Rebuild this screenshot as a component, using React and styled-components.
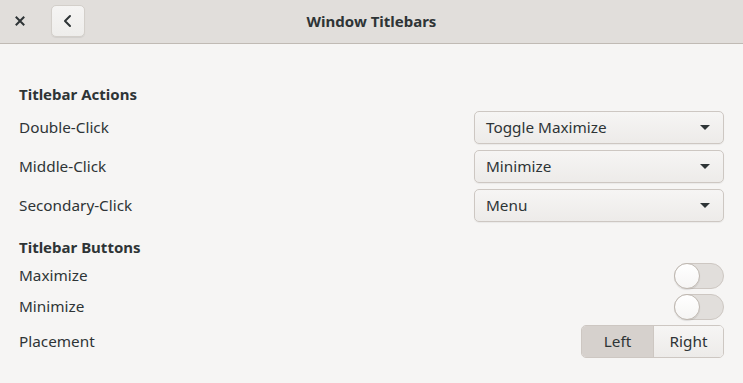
import styled, { createGlobalStyle } from "styled-components";

const GlobalStyle = createGlobalStyle`
  html, body {
    margin: 0;
    padding: 0;
    background: #f6f5f4;
  }
  body {
    font-family: "Noto Sans", "DejaVu Sans", sans-serif;
    color: #2e3436;
  }
`;

const Window = styled.div`
  width: 743px;
  height: 383px;
  background: #f6f5f4;
  display: flex;
  flex-direction: column;
`;

const HeaderBar = styled.div`
  height: 44px;
  box-sizing: border-box;
  background: #e1dedb;
  border-bottom: 1px solid #c0bab4;
  display: flex;
  align-items: center;
  position: relative;
  padding: 0 0 0 12px;
`;

const CloseButton = styled.div`
  width: 16px;
  height: 16px;
  display: flex;
  align-items: center;
  justify-content: center;
  margin-right: 23px;
  margin-top: -1px;
`;

const BackButton = styled.div`
  width: 34px;
  height: 32px;
  box-sizing: border-box;
  border: 1px solid #d3cfca;
  border-radius: 5px;
  background: linear-gradient(#f5f4f3, #eeedeb);
  box-shadow: 0 1px 1px rgba(0, 0, 0, 0.07);
  display: flex;
  align-items: center;
  justify-content: center;
  margin-top: -2px;
`;

const Title = styled.div`
  position: absolute;
  left: 0;
  right: 0;
  top: 0;
  bottom: 0;
  display: flex;
  align-items: center;
  justify-content: center;
  font-weight: 700;
  font-size: 15px;
  color: #2e3436;
  pointer-events: none;
  padding-bottom: 2px;
`;

const Content = styled.div`
  padding: 40px 19px 0 19px;
  display: flex;
  flex-direction: column;
  gap: 15px;
`;

const Section = styled.div`
  display: flex;
  flex-direction: column;
  gap: ${({ $gap }) => $gap}px;
`;

const Heading = styled.div`
  font-weight: 700;
  font-size: 15px;
  height: 20px;
  line-height: 20px;
  margin-bottom: 1px;
`;

const Row = styled.div`
  display: flex;
  align-items: center;
  justify-content: space-between;
  height: ${({ $h }) => $h}px;
`;

const Label = styled.div`
  font-size: 15.3px;
  padding-bottom: 2px;
`;

const Dropdown = styled.div`
  width: 250px;
  height: 33px;
  box-sizing: border-box;
  border: 1px solid #cdc7c2;
  border-radius: 5px;
  background: linear-gradient(#f6f5f4, #edebe9);
  box-shadow: 0 1px 1px rgba(0, 0, 0, 0.05);
  display: flex;
  align-items: center;
  justify-content: space-between;
  padding: 0 13px 1px 11px;
  font-size: 15.3px;
`;

const Arrow = styled.div`
  width: 0;
  height: 0;
  border-left: 5px solid transparent;
  border-right: 5px solid transparent;
  border-top: 5px solid #2e3436;
  margin-top: 1px;
`;

const Switch = styled.div`
  width: 50px;
  height: 26px;
  box-sizing: border-box;
  border: 1px solid #cdc7c2;
  border-radius: 13px;
  background: #e1dedb;
  position: relative;
`;

const Knob = styled.div`
  position: absolute;
  left: -1px;
  top: -1px;
  width: 26px;
  height: 26px;
  box-sizing: border-box;
  border-radius: 50%;
  border: 1px solid #bfb8b1;
  background: linear-gradient(#ffffff, #f6f5f4);
  box-shadow: 0 1px 1px rgba(0, 0, 0, 0.1);
`;

const Segmented = styled.div`
  display: flex;
  height: 33px;
  box-sizing: border-box;
  border: 1px solid #cdc7c2;
  border-radius: 5px;
  overflow: hidden;
`;

const Segment = styled.div`
  width: ${({ $w }) => $w}px;
  box-sizing: border-box;
  display: flex;
  align-items: center;
  justify-content: center;
  padding-bottom: 1px;
  font-size: 15.3px;
  background: ${({ $active }) =>
    $active ? "#d6d1cd" : "linear-gradient(#f6f5f4, #edebe9)"};
  & + & {
    border-left: 1px solid #cdc7c2;
  }
`;

export default function App() {
  return (
    <>
      <GlobalStyle />
      <Window>
        <HeaderBar>
          <CloseButton>
            <svg width="10" height="10" viewBox="0 0 10 10">
              <path d="M1.5 1.5 L8.5 8.5 M8.5 1.5 L1.5 8.5" stroke="#2e3436" strokeWidth="2" strokeLinecap="square" />
            </svg>
          </CloseButton>
          <BackButton>
            <svg width="16" height="16" viewBox="0 0 16 16">
              <path d="M10 3 L5 8 L10 13" fill="none" stroke="#2e3436" strokeWidth="2" strokeLinecap="round" strokeLinejoin="round" />
            </svg>
          </BackButton>
          <Title>Window Titlebars</Title>
        </HeaderBar>
        <Content>
          <Section $gap={6}>
            <Heading>Titlebar Actions</Heading>
            <Row $h={33}>
              <Label>Double-Click</Label>
              <Dropdown>
                Toggle Maximize
                <Arrow />
              </Dropdown>
            </Row>
            <Row $h={33}>
              <Label>Middle-Click</Label>
              <Dropdown>
                Minimize
                <Arrow />
              </Dropdown>
            </Row>
            <Row $h={33}>
              <Label>Secondary-Click</Label>
              <Dropdown>
                Menu
                <Arrow />
              </Dropdown>
            </Row>
          </Section>
          <Section $gap={5}>
            <Heading>Titlebar Buttons</Heading>
            <Row $h={26}>
              <Label>Maximize</Label>
              <Switch>
                <Knob />
              </Switch>
            </Row>
            <Row $h={26}>
              <Label>Minimize</Label>
              <Switch>
                <Knob />
              </Switch>
            </Row>
            <Row $h={33}>
              <Label>Placement</Label>
              <Segmented>
                <Segment $w={71} $active>Left</Segment>
                <Segment $w={70}>Right</Segment>
              </Segmented>
            </Row>
          </Section>
        </Content>
      </Window>
    </>
  );
}
